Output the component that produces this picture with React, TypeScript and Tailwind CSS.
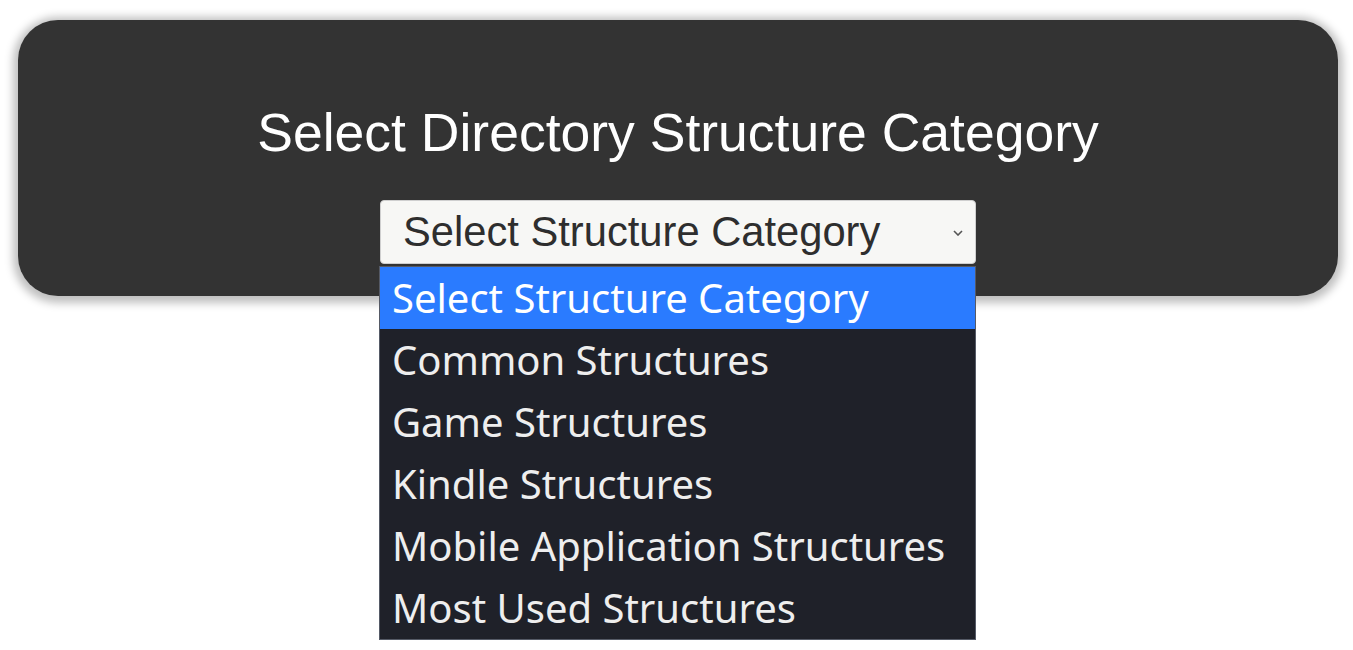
import React from "react";

const options = [
  "Select Structure Category",
  "Common Structures",
  "Game Structures",
  "Kindle Structures",
  "Mobile Application Structures",
  "Most Used Structures",
];

export default function App() {
  return (
    <div className="min-h-[650px] w-full bg-white pt-[20px] pl-[18px] pr-[15px]" style={{ fontFamily: '"Liberation Sans", Arial, sans-serif' }}>
      <div className="flex h-[276px] flex-col items-center rounded-[40px] bg-[#333333] pt-[83px] shadow-[0_2px_8px_5px_rgba(0,0,0,0.25)]">
        <h1 className="text-[53.5px] leading-[60px] font-normal text-white">Select Directory Structure Category</h1>
        <div className="relative mt-[37px]">
          <div className="flex h-[64px] w-[596px] items-center justify-between rounded-[4px] border border-[#cfcfcf] bg-[#f7f7f5] pl-[22px] pr-[12px]">
            <span className="text-[41.7px] leading-none text-[#2e2e2e]">Select Structure Category</span>
            <svg width="10" height="6" viewBox="0 0 10 6" className="mt-[2px]">
              <path d="M1 1 L5 5 L9 1" fill="none" stroke="#555" strokeWidth="1.6" />
            </svg>
          </div>
          <div className="absolute left-[-1px] top-[66px] z-10 w-[597px] border border-[#555a66] bg-[#1f2129]" style={{ fontFamily: '"Noto Sans", "Open Sans", sans-serif' }}>
            {options.map((o, i) => (
              <div
                key={o}
                className={
                  i === 0
                    ? "flex h-[62px] items-center bg-[#2a7bff] pl-[12px] text-[40px] text-white"
                    : "flex h-[62px] items-center pl-[12px] text-[40px] text-[#eeeeee]"
                }
              >
                {o}
              </div>
            ))}
          </div>
        </div>
      </div>
    </div>
  );
}
